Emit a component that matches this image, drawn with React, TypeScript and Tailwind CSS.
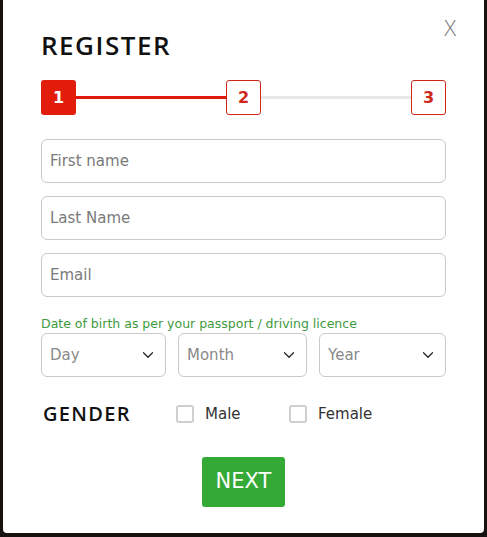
import React from 'react';
import { ChevronDown } from 'lucide-react';

const steps = ['1', '2', '3'];
const headingFont = { fontFamily: '"Open Sans", "Liberation Sans", sans-serif' };

function TextField({ placeholder }: { placeholder: string }) {
  return (
    <input
      type="text"
      placeholder={placeholder}
      className="h-[44px] w-full rounded-[6px] border border-[#c9c9c9] px-[8px] text-[15px] text-[#333] outline-none placeholder:text-[#7a7a7a]"
    />
  );
}

function SelectBox({ label, width }: { label: string; width: string }) {
  return (
    <div
      className={`${width} flex h-[44px] items-center justify-between rounded-[6px] border border-[#c9c9c9] pl-[8px] pr-[8px] text-[15px] text-[#8a8a8a]`}
    >
      <span>{label}</span>
      <ChevronDown size={18} strokeWidth={1.6} className="text-[#222]" />
    </div>
  );
}

function Check({ label }: { label: string }) {
  return (
    <label className="flex items-center gap-[11px] text-[15px] text-[#333]">
      <span className="block h-[18px] w-[18px] rounded-[3px] border-2 border-[#cfcfcf] bg-white" />
      {label}
    </label>
  );
}

export default function App() {
  return (
    <div
      className="h-[537px] w-[487px] bg-[#15120f] px-[3px] pb-[4px]"
      style={{ fontFamily: '"DejaVu Sans", "Liberation Sans", sans-serif' }}
    >
      <div className="relative h-[533px] w-[481px] rounded-b-[4px] bg-white px-[38px] pt-[31px]">
        <button
          className="absolute right-[28px] top-[16px] text-[22px] font-light leading-none text-[#777]"
          style={headingFont}
        >
          X
        </button>

        <h1 className="text-[26px] font-semibold leading-[28px] tracking-[1.5px] text-[#111]" style={headingFont}>
          REGISTER
        </h1>

        {/* step indicator */}
        <div className="mt-[21px] flex items-center">
          {steps.map((s, i) => (
            <React.Fragment key={s}>
              {i > 0 && (
                <div className={`h-[3px] flex-1 ${i === 1 ? 'bg-[#e0190c]' : 'bg-[#e8e8e8]'}`} />
              )}
              <div
                className={`flex h-[35px] w-[35px] items-center justify-center rounded-[3px] text-[16px] font-bold ${
                  i === 0
                    ? 'bg-[#e31d0c] text-white'
                    : 'border border-[#d0271b] bg-white text-[#d0271b]'
                }`}
              >
                {s}
              </div>
            </React.Fragment>
          ))}
        </div>

        <div className="mt-[24px] flex flex-col gap-[13px]">
          <TextField placeholder="First name" />
          <TextField placeholder="Last Name" />
          <TextField placeholder="Email" />
        </div>

        <p className="mt-[19px] text-[12.5px] leading-[16px] text-[#3d9b3d]">
          Date of birth as per your passport / driving licence
        </p>
        <div className="mt-[1px] flex gap-[12px]">
          <SelectBox label="Day" width="w-[125px]" />
          <SelectBox label="Month" width="w-[129px]" />
          <SelectBox label="Year" width="w-[127px]" />
        </div>

        <div className="mt-[22px] flex items-center pl-[2px]">
          <span className="w-[133px] text-[20px] font-semibold tracking-[1.3px] text-[#111]" style={headingFont}>
            GENDER
          </span>
          <div className="w-[113px]">
            <Check label="Male" />
          </div>
          <Check label="Female" />
        </div>

        <div className="mt-[28px] flex justify-center">
          <button className="h-[50px] w-[83px] rounded-[3px] bg-[#34a936] text-[21px] text-white">NEXT</button>
        </div>
      </div>
    </div>
  );
}
